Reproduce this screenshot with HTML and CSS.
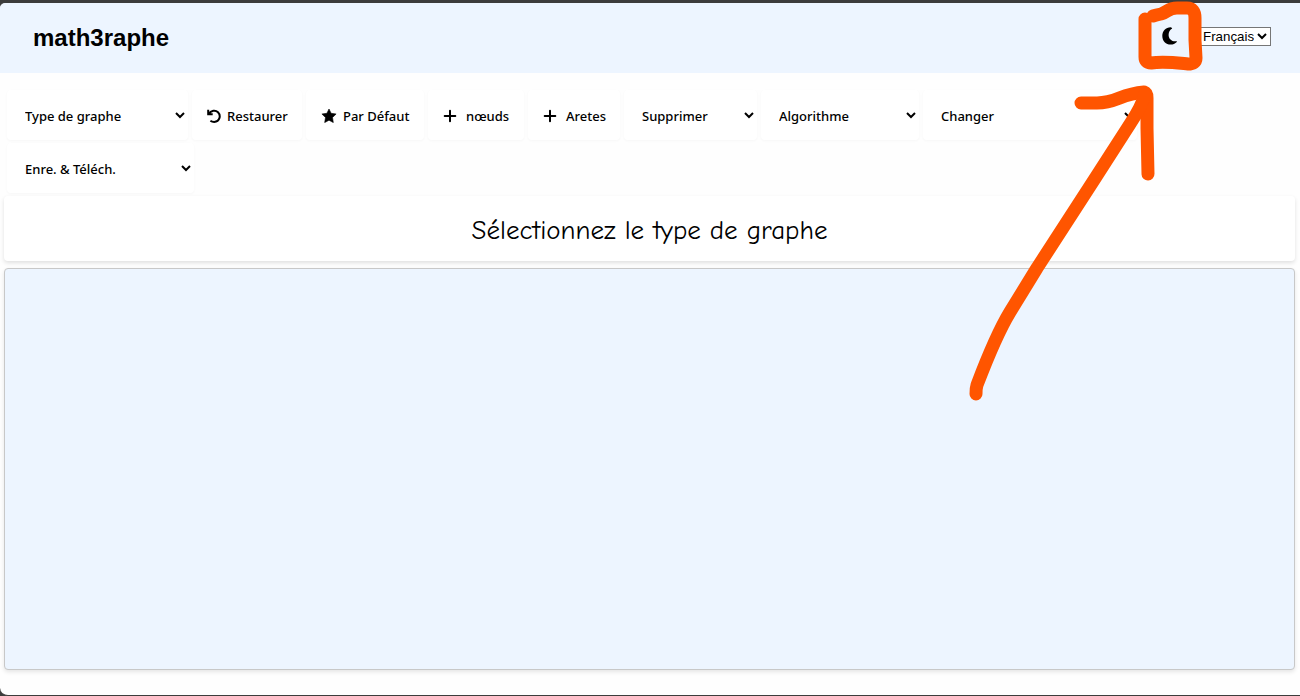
FILE: index.html
```html
<!DOCTYPE html>
<html lang="fr">
<head>
<meta charset="utf-8">
<title>math3raphe</title>
<link rel="stylesheet" href="styles.css">
</head>
<body>
<div class="page">
  <header class="header">
    <h1 class="brand">math3raphe</h1>
    <div class="header-tools">
      <button class="theme" type="button" aria-label="Mode sombre">
        <svg width="16" height="18" viewBox="0 0 16 18" aria-hidden="true"><path d="M8.600 .2C3.800 .2 .3 4 .3 8.900s3.600 8.700 8.300 8.700c2.400 0 4.600-1 6.200-2.600.3-.4 0-.9-.5-.8-4 .7-7.700-2.200-7.700-6.300C6.600 5.100 7.800 2.900 9.800 1.700c.5-.3.4-.9-.1-1-.4-.3-.7-.5-1.100-.5z"/></svg>
      </button>
      <select class="language" aria-label="Langue"><option>Français</option></select>
    </div>
  </header>
  <nav class="toolbar" aria-label="Outils">
    <select class="tool tool-type" aria-label="Type de graphe"><option>Type de graphe</option></select>
    <button class="tool tool-restore" type="button">
      <svg width="14" height="14" viewBox="0 0 14 14" aria-hidden="true"><path d="M1.200 .8v4.500h4.500M1.600 5C4 1.300 8.500 .8 11 3.200c3.200 3.300 1.800 9.300-3.800 9.700-1.600 0-2.700-.4-3.800-1.200" fill="none" stroke="currentColor" stroke-width="2"/></svg>
      Restaurer
    </button>
    <button class="tool tool-default" type="button">
      <svg width="16" height="14" viewBox="0 0 16 14" aria-hidden="true"><path d="M8 0l2.100 4.300 5 .7-3.600 3.500.8 5.100L8 11.200l-4.300 2.400.8-5.100L.9 5l5-.7z" stroke="currentColor" stroke-linejoin="round" stroke-width=".6"/></svg>
      Par Défaut
    </button>
    <button class="tool tool-nodes" type="button">
      <svg class="plus" width="14" height="14" viewBox="0 0 14 14" aria-hidden="true"><path d="M7 1.700v10.600M1.700 7h10.600" stroke="currentColor" stroke-width="2" stroke-linecap="round"/></svg>
      nœuds
    </button>
    <button class="tool tool-edges" type="button">
      <svg class="plus" width="14" height="14" viewBox="0 0 14 14" aria-hidden="true"><path d="M7 1.700v10.600M1.700 7h10.600" stroke="currentColor" stroke-width="2" stroke-linecap="round"/></svg>
      Aretes
    </button>
    <select class="tool tool-remove" aria-label="Supprimer"><option>Supprimer</option></select>
    <select class="tool tool-algorithm" aria-label="Algorithme"><option>Algorithme</option></select>
    <select class="tool tool-change" aria-label="Changer"><option>Changer</option></select>
    <select class="tool tool-save" aria-label="Enregistrer et télécharger"><option>Enre. &amp; Téléch.</option></select>
  </nav>
  <main class="workspace">
    <h2 class="prompt">Sélectionnez le type de graphe</h2>
    <section class="board" aria-label="Zone du graphe"></section>
  </main>
  <svg class="pointer" width="340" height="410" viewBox="960 0 340 410" aria-hidden="true">
    <path d="M1145 19V57Q1145 63 1151 63C1164 61 1178 63 1188 64Q1196 64 1196 58L1195 40V18Q1195 8 1187 8H1177C1168 8 1168 12 1161 14Q1156 15 1153 16"/>
    <path d="M1081 103H1097C1117 103 1120 94 1144 92Q1147 93 1147 98V128L1148 174"/>
    <path d="M1145 94C1143 102 1138 112 1130 124L1094 180L1037 268L1010 312Q996 335 977 385Q976 388 976 394"/>
  </svg>
</div>
</body>
</html>
```
FILE: styles.css
```css
* {
  box-sizing: border-box;
}

body {
  margin: 0;
  background: #3c3c3c;
  color: #000;
  font-family: "Segoe UI", "Noto Sans", sans-serif;
}

.page {
  position: relative;
  display: flex;
  flex-direction: column;
  min-height: 100vh;
  border: solid #3c3c3c;
  border-width: 3px 0 1px;
  border-radius: 8px 0 0 8px;
  background: #fefefe;
}

.header {
  display: flex;
  align-items: center;
  justify-content: space-between;
  height: 70px;
  padding: 0 29px 4px 33px;
  border-radius: 5px 0 0 0;
  background: #edf5ff;
}

.brand {
  margin: 4px 0 0;
  font: bold 24px/28px "Liberation Sans", Arial, sans-serif;
}

.header-tools {
  display: flex;
  align-items: center;
}

.theme {
  display: flex;
  padding: 8px;
  border: 0;
  background: none;
  color: #000;
}

.language {
  width: 73px;
  height: 19px;
  margin-left: 12px;
  padding: 0;
  border: 1px solid #767676;
  border-radius: 0;
  background-color: #fff;
  color: #000;
}

.toolbar {
  display: flex;
  flex-wrap: wrap;
  gap: 3px 4px;
  padding: 17px 7px 0;
}

.tool {
  height: 50px;
  border: 0;
  border-radius: 4px;
  background-color: #fff;
  color: #000;
  font: 500 13px "Segoe UI", "Noto Sans", sans-serif;
  box-shadow: 0 1px 3px rgba(0, 0, 0, 0.03);
}

select.tool {
  padding: 1px 0 0 14px;
}

button.tool {
  display: flex;
  align-items: center;
  gap: 6px;
  padding: 1px 0 0 15px;
  white-space: nowrap;
}

.plus {
  margin-right: 3px;
}

.tool-type { width: 181px; }
.tool-restore { width: 110px; }
.tool-default { width: 118px; }
.tool-nodes { width: 96px; }
.tool-edges { width: 92px; }
.tool-remove { width: 133px; }
.tool-algorithm { width: 158px; }
.tool-change { width: 214px; }
.tool-save { width: 187px; }

.workspace {
  display: flex;
  flex: 1;
  flex-direction: column;
  gap: 7px;
  padding: 3px 5px 25px 4px;
}

.prompt {
  margin: 0;
  padding: 17px 0 13px;
  border-radius: 4px;
  background: #fff;
  font: 400 27px/35px "Comic Sans MS", "Comic Neue", "Open Sans", sans-serif;
  text-align: center;
  box-shadow: 0 2px 4px rgba(0, 0, 0, 0.12);
}

.board {
  flex: 1;
  border: 1px solid #c8c8c8;
  border-radius: 4px;
  background: #edf5ff;
  box-shadow: 0 2px 4px rgba(0, 0, 0, 0.1);
}

.pointer {
  position: absolute;
  top: -3px;
  right: 0;
  fill: none;
  stroke: #ff5500;
  stroke-width: 13;
  stroke-linecap: round;
  stroke-linejoin: round;
  pointer-events: none;
}
```
